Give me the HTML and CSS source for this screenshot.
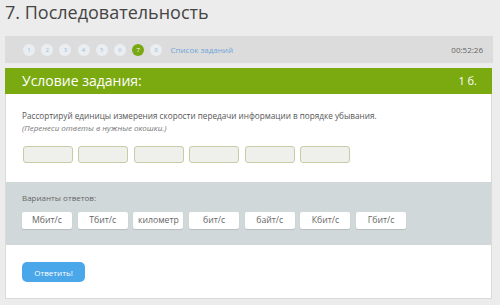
FILE: index.html
```html
<!DOCTYPE html>
<html lang="ru">
<head>
<meta charset="utf-8">
<link rel="stylesheet" href="styles.css">
</head>
<body>
<div class="page">
  <h1 class="title">7. Последовательность</h1>
  <div class="nav">
    <div class="steps">
      <span class="step">1</span>
      <span class="step">2</span>
      <span class="step">3</span>
      <span class="step">4</span>
      <span class="step">5</span>
      <span class="step">6</span>
      <span class="step active">7</span>
      <span class="step">8</span>
      <a class="list-link">Список заданий</a>
    </div>
    <span class="timer">00:52:26</span>
  </div>
  <div class="card">
    <div class="card-head">
      <span class="head-title">Условие задания:</span>
      <span class="head-score">1 б.</span>
    </div>
    <div class="card-body">
      <p class="task">Рассортируй единицы измерения скорости передачи информации в порядке убывания.</p>
      <p class="hint">(Перенеси ответы в нужные окошки.)</p>
      <div class="slots">
        <span class="slot"></span>
        <span class="slot"></span>
        <span class="slot"></span>
        <span class="slot"></span>
        <span class="slot"></span>
        <span class="slot"></span>
      </div>
    </div>
    <div class="variants">
      <div class="variants-label">Варианты ответов:</div>
      <div class="options">
        <span class="option">Мбит/с</span>
        <span class="option">Тбит/с</span>
        <span class="option">километр</span>
        <span class="option">бит/с</span>
        <span class="option">байт/с</span>
        <span class="option">Кбит/с</span>
        <span class="option">Гбит/с</span>
      </div>
    </div>
    <div class="card-foot">
      <button class="answer">Ответить!</button>
    </div>
  </div>
</div>
</body>
</html>
```

FILE: styles.css
```css
* { box-sizing: border-box; }
html, body {
  margin: 0;
  padding: 0;
  background: #ececec;
  font-family: "Open Sans", "Liberation Sans", sans-serif;
}
.page {
  padding: 0 7px 0 5px;
}
.title {
  margin: 0;
  font-size: 18px;
  line-height: 25px;
  font-weight: 400;
  color: #444;
}
.nav {
  margin-top: 11px;
  height: 27px;
  background: #dcdcdc;
  display: flex;
  align-items: center;
  justify-content: space-between;
  padding: 0 10px 0 18px;
}
.steps {
  display: flex;
  align-items: center;
  gap: 6.2px;
}
.step {
  width: 12px;
  height: 12px;
  border-radius: 50%;
  background: #eaeef1;
  color: #9dbbd9;
  font-size: 6px;
  line-height: 12px;
  text-align: center;
}
.step.active {
  background: #78a812;
  color: #fff;
}
.list-link {
  margin-left: 2px;
  font-size: 8px;
  color: #6fa6d9;
}
.timer {
  font-size: 8px;
  color: #666;
}
.card {
  margin-top: 5px;
  width: 487px;
  background: #fff;
  border: 1px solid #dadada;
  border-top: none;
}
.card-head {
  height: 26px;
  margin: 0 -1px;
  background: #7aaa0f;
  color: #fff;
  display: flex;
  justify-content: space-between;
  align-items: center;
  padding: 0 15px 0 17px;
}
.head-title {
  font-size: 14px;
  line-height: 26px;
}
.head-score {
  font-size: 11px;
  line-height: 26px;
}
.card-body {
  padding: 16px 16px 19px 16px;
}
.task {
  margin: 0;
  font-size: 8.2px;
  line-height: 12px;
  color: #555;
}
.hint {
  margin: 0;
  font-size: 8px;
  line-height: 12px;
  font-style: italic;
  color: #777;
}
.slots {
  margin-top: 12px;
  margin-left: 1px;
  display: flex;
  gap: 5.4px;
}
.slot {
  width: 50px;
  height: 17px;
  border: 1px solid #c6cda6;
  border-radius: 3px;
  background: #efefec;
}
.variants {
  background: #d1d8da;
  padding: 10px 16px 16px 16px;
}
.variants-label {
  font-size: 8px;
  line-height: 12px;
  color: #666;
}
.options {
  margin-top: 8px;
  display: flex;
  gap: 5.7px;
}
.option {
  width: 50px;
  height: 17px;
  background: #fff;
  border-radius: 2px;
  box-shadow: 0 1px 1px rgba(0,0,0,0.12);
  font-size: 8.7px;
  line-height: 17px;
  text-align: center;
  color: #666;
}
.card-foot {
  padding: 17px 16px 16px 16px;
}
.answer {
  display: block;
  width: 63px;
  height: 20px;
  border: none;
  border-radius: 5px;
  background: #4aa7ea;
  color: #fff;
  font-family: "Open Sans", "Liberation Sans", sans-serif;
  font-size: 8px;
  padding: 0;
}
```
